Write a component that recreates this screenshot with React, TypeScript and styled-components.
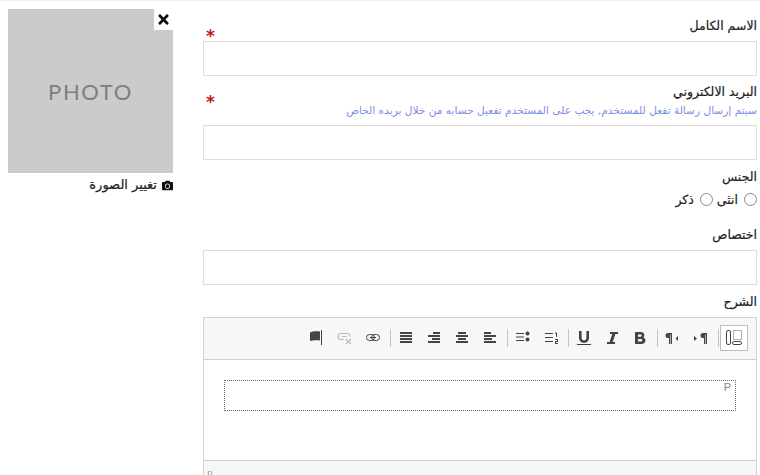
import React from 'react';
import styled, { createGlobalStyle } from 'styled-components';
import { FaCamera, FaTimes } from 'react-icons/fa';

const GlobalStyle = createGlobalStyle`
    html, body {
        margin: 0;
        padding: 0;
        background: #fff;
        overflow: hidden;
    }
    body {
        font-family: "DejaVu Sans", sans-serif;
        color: #222;
    }
`;

const Page = styled.div`
    direction: rtl;
    width: 760px;
    height: 475px;
    box-sizing: border-box;
    overflow: hidden;
    border-top: 1px solid #eee;
    padding: 8px 3px 0 8px;
    display: grid;
    grid-template-columns: 554px 165px;
    column-gap: 30px;
`;

const Form = styled.form`
    display: flex;
    flex-direction: column;
    padding-top: 7px;
`;

const Field = styled.div<{ $gap: number }>`
    position: relative;
    margin-bottom: ${(p) => p.$gap}px;
`;

const Label = styled.div`
    font-size: 12.5px;
    line-height: 20px;
    -webkit-text-stroke: 0.2px #222;
`;

const Star = styled.span`
    position: absolute;
    top: 12px;
    left: 3px;
    color: #c4161c;
    font-size: 17px;
    line-height: 17px;
    font-weight: 700;
`;

const Hint = styled.div`
    font-size: 10.6px;
    line-height: 14px;
    margin: 1px 0 8px;
    white-space: nowrap;
    color: #7d8ee6;
`;

const TextInput = styled.input`
    display: block;
    box-sizing: border-box;
    width: 100%;
    height: 35px;
    margin-top: 5px;
    border: 1px solid #ddd;
    background: #fff;
    outline: none;
`;

const RadioRow = styled.div`
    display: flex;
    align-items: center;
    height: 20px;
    margin-top: 2px;
`;

const RadioLabel = styled.label`
    display: flex;
    align-items: center;
    font-size: 12.5px;
    -webkit-text-stroke: 0.2px #222;
    margin-left: 4px;
`;

const Radio = styled.input`
    appearance: none;
    box-sizing: border-box;
    width: 13px;
    height: 13px;
    margin: 0 0 0 6px;
    border: 1px solid #888;
    border-radius: 50%;
    background: #fff;
`;

const Editor = styled.div`
    margin-top: 5px;
    border: 1px solid #d1d1d1;
    border-bottom: none;
`;

const Toolbar = styled.div`
    height: 42px;
    box-sizing: border-box;
    background: #f7f7f7;
    border-bottom: 1px solid #d1d1d1;
    padding: 7px 8px 0 0;
    display: flex;
    align-items: flex-start;
`;

const ToolButton = styled.span<{ $active?: boolean }>`
    width: 28px;
    height: 26px;
    box-sizing: border-box;
    display: flex;
    align-items: center;
    justify-content: center;
    border: 1px solid ${(p) => (p.$active ? '#bdbdbd' : 'transparent')};
    background: ${(p) => (p.$active ? '#fff' : 'transparent')};
`;

const Divider = styled.span`
    width: 1px;
    height: 18px;
    margin: 4px 1px 0 3px;
    background: #c4c4c4;
`;

const EditArea = styled.div`
    height: 100px;
    box-sizing: border-box;
    padding: 20px 20px 0;
    background: #fff;
`;

const Block = styled.div`
    position: relative;
    height: 31px;
    box-sizing: border-box;
    border: 1px dotted #666;
`;

const BlockTag = styled.span`
    position: absolute;
    top: 1px;
    right: 4px;
    font-family: "Liberation Sans", sans-serif;
    font-size: 11px;
    line-height: 11px;
    color: #888;
`;

const StatusBar = styled.div`
    height: 30px;
    background: #f7f7f7;
    border-top: 1px solid #d1d1d1;
    direction: ltr;
    padding: 7px 0 0 3px;
    font-size: 9px;
    color: #999;
`;

const PhotoColumn = styled.div`
    display: flex;
    flex-direction: column;
`;

const Photo = styled.div`
    position: relative;
    height: 164px;
    background: #cbcbcb;
    display: flex;
    align-items: center;
    justify-content: center;
`;

const PhotoText = styled.span`
    direction: ltr;
    font-family: Lato, sans-serif;
    font-size: 22px;
    letter-spacing: 1.6px;
    color: #808080;
`;

const RemoveButton = styled.button`
    position: absolute;
    top: 0;
    right: 0;
    width: 19px;
    height: 21px;
    padding: 0;
    border: none;
    background: #fff;
    color: #111;
    display: flex;
    align-items: center;
    justify-content: center;
    font-size: 15px;
`;

const ChangePhoto = styled.div`
    display: flex;
    align-items: center;
    gap: 5px;
    margin-top: 4px;
    font-size: 13px;
    line-height: 16px;
    -webkit-text-stroke: 0.2px #222;
`;

const icons: Record<string, React.ReactNode> = {
    blocks: (
        <>
            <rect x="0.5" y="0.5" width="4" height="14" rx="1.5" fill="none" stroke="#444" />
            <rect x="7.5" y="0.5" width="8" height="9" fill="none" stroke="#666" strokeDasharray="1 1" />
            <rect x="6.5" y="11.5" width="9" height="3" rx="1.5" fill="none" stroke="#444" />
        </>
    ),
    pilcrowRight: (
        <>
            <path d="M1 6l3 2.5L1 11z" fill="#444" />
            <path d="M14 3H10a2.5 2.5 0 0 0 0 5h1v6h1.2V4.5h.6V14H14V3z" fill="#444" />
        </>
    ),
    pilcrowLeft: (
        <>
            <path d="M7 3H3a2.5 2.5 0 0 0 0 5h1v6h1.2V4.5h.6V14H7V3z" fill="#444" />
            <path d="M13 6l-2.5 2.5L13 11z" fill="#444" />
        </>
    ),
    bold: <path d="M3 2h6a3.3 3.3 0 0 1 2.6 5.4A3.5 3.5 0 0 1 10 14H3zm3 2.4v2.3h2.6a1.15 1.15 0 0 0 0-2.3zm0 4.7v2.5h3a1.25 1.25 0 0 0 0-2.5z" fill="#444" fillRule="evenodd" />,
    italic: <path d="M6 2h8v2h-2.6L8.7 12H11v2H3v-2h2.6l2.7-8H6z" fill="#444" />,
    underline: (
        <>
            <path d="M3 1h2.6v7a2.4 2.4 0 0 0 4.8 0V1H13v7a5 5 0 0 1-10 0z" fill="#444" />
            <rect x="1" y="14" width="14" height="1" fill="#444" />
        </>
    ),
    numbered: (
        <>
            <rect x="2" y="3" width="8" height="1" fill="#444" />
            <rect x="2" y="7" width="8" height="1" fill="#444" />
            <rect x="2" y="11" width="8" height="1" fill="#444" />
            <path d="M12 2.5h2v4.5h-1V3.5h-1zM12 9h3v3h-2v1h2v1h-3v-3h2v-1h-2z" fill="#444" />
        </>
    ),
    bullets: (
        <>
            <rect x="1" y="3" width="8" height="1" fill="#444" />
            <rect x="1" y="6.5" width="8" height="1" fill="#444" />
            <rect x="1" y="10" width="8" height="1" fill="#444" />
            <circle cx="12.5" cy="3.5" r="2" fill="#444" />
            <circle cx="12.5" cy="9.5" r="2" fill="#444" />
        </>
    ),
    alignLeft: (
        <>
            <rect x="2" y="2" width="7" height="2" fill="#444" />
            <rect x="2" y="5" width="12" height="2" fill="#444" />
            <rect x="2" y="8" width="8" height="2" fill="#444" />
            <rect x="2" y="11" width="12" height="2" fill="#444" />
        </>
    ),
    alignCenter: (
        <>
            <rect x="4" y="2" width="8" height="2" fill="#444" />
            <rect x="2" y="5" width="12" height="2" fill="#444" />
            <rect x="4" y="8" width="8" height="2" fill="#444" />
            <rect x="2" y="11" width="12" height="2" fill="#444" />
        </>
    ),
    alignRight: (
        <>
            <rect x="7" y="2" width="7" height="2" fill="#444" />
            <rect x="2" y="5" width="12" height="2" fill="#444" />
            <rect x="6" y="8" width="8" height="2" fill="#444" />
            <rect x="2" y="11" width="12" height="2" fill="#444" />
        </>
    ),
    justify: (
        <>
            <rect x="2" y="2" width="12" height="2" fill="#444" />
            <rect x="2" y="5" width="12" height="2" fill="#444" />
            <rect x="2" y="8" width="12" height="2" fill="#444" />
            <rect x="2" y="11" width="12" height="2" fill="#444" />
        </>
    ),
    link: (
        <>
            <rect x="1.5" y="4.5" width="8" height="6" rx="3" fill="none" stroke="#444" />
            <rect x="6.5" y="4.5" width="8" height="6" rx="3" fill="none" stroke="#444" />
            <path d="M5 7.5h6" stroke="#444" />
        </>
    ),
    unlink: (
        <>
            <path d="M7 9.5H4a3 3 0 0 1 0-6h6a3 3 0 0 1 3 3" fill="none" stroke="#bbb" strokeWidth="1.2" />
            <path d="M5 6.5h5" stroke="#bbb" />
            <path d="M9 9l5 5m0-5l-5 5" stroke="#bbb" strokeWidth="1.3" />
        </>
    ),
    anchor: (
        <>
            <path d="M1 2.5c3-1.5 6-1.5 10-1v9c-4-.5-7-.5-10 .5z" fill="#444" />
            <rect x="12" y="0" width="1" height="15" fill="#444" />
        </>
    ),
};

const Icon = ({ name }: { name: string }) => (
    <svg width="16" height="16" viewBox="0 0 16 16">
        {icons[name]}
    </svg>
);

const toolbarGroups = [
    ['blocks'],
    ['pilcrowRight', 'pilcrowLeft'],
    ['bold', 'italic', 'underline'],
    ['numbered', 'bullets'],
    ['alignLeft', 'alignCenter', 'alignRight', 'justify'],
    ['link', 'unlink', 'anchor'],
];

const App = () => (
    <Page>
        <GlobalStyle />
        <Form>
            <Field $gap={6}>
                <Label>الاسم الكامل</Label>
                <Star>*</Star>
                <TextInput />
            </Field>
            <Field $gap={7}>
                <Label>البريد الالكتروني</Label>
                <Star>*</Star>
                <Hint>سيتم إرسال رسالة تفعل للمستخدم, يجب على المستخدم تفعيل حسابه من خلال بريده الخاص</Hint>
                <TextInput />
            </Field>
            <Field $gap={16}>
                <Label>الجنس</Label>
                <RadioRow>
                    <RadioLabel>
                        <Radio type="radio" name="gender" />
                        انثى
                    </RadioLabel>
                    <RadioLabel>
                        <Radio type="radio" name="gender" />
                        ذكر
                    </RadioLabel>
                </RadioRow>
            </Field>
            <Field $gap={7}>
                <Label>اختصاص</Label>
                <TextInput />
            </Field>
            <Label>الشرح</Label>
            <Editor>
                <Toolbar>
                    {toolbarGroups.map((group, index) => (
                        <React.Fragment key={index}>
                            {index > 0 && <Divider />}
                            {group.map((name) => (
                                <ToolButton key={name} $active={name === 'blocks'}>
                                    <Icon name={name} />
                                </ToolButton>
                            ))}
                        </React.Fragment>
                    ))}
                </Toolbar>
                <EditArea>
                    <Block>
                        <BlockTag>P</BlockTag>
                    </Block>
                </EditArea>
                <StatusBar>p</StatusBar>
            </Editor>
        </Form>
        <PhotoColumn>
            <Photo>
                <PhotoText>PHOTO</PhotoText>
                <RemoveButton type="button">
                    <FaTimes />
                </RemoveButton>
            </Photo>
            <ChangePhoto>
                <FaCamera size={11} color="#111" />
                تغيير الصورة
            </ChangePhoto>
        </PhotoColumn>
    </Page>
);

export default App;
